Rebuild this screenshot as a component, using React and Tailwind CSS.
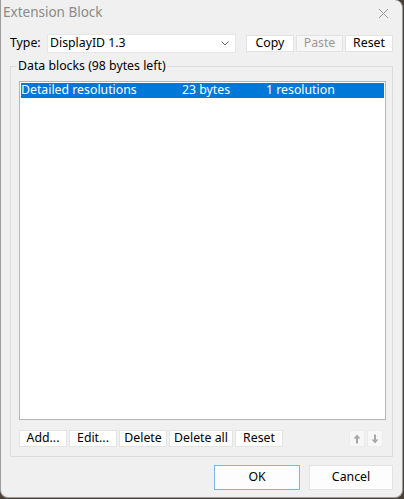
import React from "react";

const font = { fontFamily: '"Noto Sans", "Segoe UI", Arial, sans-serif' };

function Btn({ children, w, disabled, className = "" }) {
  return (
    <div
      className={`flex items-center justify-center h-[17px] border border-[#e3e3e3] text-[12.3px] leading-none ${disabled ? "text-[#9a9a9a] bg-[#f6f6f6]" : "text-black bg-white"} ${w} ${className}`}
    >
      {children}
    </div>
  );
}

function Arrow({ down }) {
  return (
    <div className="flex items-center justify-center w-[16px] h-[17px] bg-[#f7f7f7] border border-[#ececec]">
      <svg width="8" height="10" viewBox="0 0 8 10">
        {down ? (
          <path d="M4 9.5 L0.5 5.5 H3 V0.5 H5 V5.5 H7.5 Z" fill="#a8a8a8" />
        ) : (
          <path d="M4 0.5 L0.5 4.5 H3 V9.5 H5 V4.5 H7.5 Z" fill="#a8a8a8" />
        )}
      </svg>
    </div>
  );
}

export default function App() {
  return (
    <div className="w-[404px] h-[499px] bg-[#4a4036] pr-[1px] pb-[1px]" style={font}>
      <div className="w-full h-full bg-[#f0f0f0] rounded-tr-[8px] rounded-b-[8px] border-r border-b border-l border-[#9c9c9c] flex flex-col">
        {/* title bar */}
        <div className="h-[26px] flex items-center pl-[2px] pr-[13px] text-[13.5px] text-[#8a8a8a]">
          <span className="flex-1 -mt-[1px]">Extension Block</span>
          <svg width="11" height="11" viewBox="0 0 11 11">
            <path d="M1 1 L10 10 M10 1 L1 10" stroke="#9a9a9a" strokeWidth="1" />
          </svg>
        </div>

        {/* type row */}
        <div className="flex items-center h-[19px] mt-[8px] pl-[9px]">
          <span className="text-[12.3px] text-black w-[37px]">Type:</span>
          <div className="flex items-center w-[189px] h-[19px] bg-white border border-[#e6e6e6] pl-[2px] pr-[6px]">
            <span className="flex-1 text-[12.3px] text-black">DisplayID 1.3</span>
            <svg width="8" height="5" viewBox="0 0 8 5">
              <path d="M0.5 0.5 L4 4 L7.5 0.5" stroke="#666" fill="none" strokeWidth="1" />
            </svg>
          </div>
          <Btn w="w-[48px]" className="ml-[10px]">Copy</Btn>
          <Btn w="w-[47px]" className="ml-[2px]" disabled>Paste</Btn>
          <Btn w="w-[48px]" className="ml-[2px]">Reset</Btn>
        </div>

        {/* group box */}
        <div className="relative mt-[13px] ml-[9px] w-[383px] h-[391px] border border-[#dcdcdc] flex flex-col">
          <span className="absolute -top-[9px] left-[6px] px-[1px] bg-[#f0f0f0] text-[12.3px] text-black leading-[16px]">
            Data blocks (98 bytes left)
          </span>
          <div className="mt-[14px] ml-[8px] w-[367px] h-[339px] bg-white border border-[#b5b5b5] p-[1px]">
            <div className="flex items-center h-[15px] bg-[#0078d7] text-white text-[12.3px] leading-none">
              <span className="w-[161px]">Detailed resolutions</span>
              <span className="w-[84px]">23 bytes</span>
              <span>1 resolution</span>
            </div>
          </div>
          <div className="flex items-center mt-[10px] ml-[8px]">
            <Btn w="w-[48px]">Add...</Btn>
            <Btn w="w-[48px]" className="ml-[2px]">Edit...</Btn>
            <Btn w="w-[48px]" className="ml-[2px]">Delete</Btn>
            <Btn w="w-[64px]" className="ml-[2px]">Delete all</Btn>
            <Btn w="w-[48px]" className="ml-[2px]">Reset</Btn>
            <div className="flex-1" />
            <Arrow />
            <div className="w-[2px]" />
            <Arrow down />
            <div className="w-[9px]" />
          </div>
        </div>

        {/* bottom buttons */}
        <div className="flex mt-[8px] pl-[213px]">
          <div className="flex items-center justify-center w-[86px] h-[25px] bg-[#fdfdfd] border border-[#7fb4e6] text-[12.3px] text-black">
            OK
          </div>
          <div className="flex items-center justify-center w-[84px] h-[25px] ml-[9px] bg-[#fdfdfd] border border-[#e3e3e3] text-[12.3px] text-black">
            Cancel
          </div>
        </div>
      </div>
    </div>
  );
}
